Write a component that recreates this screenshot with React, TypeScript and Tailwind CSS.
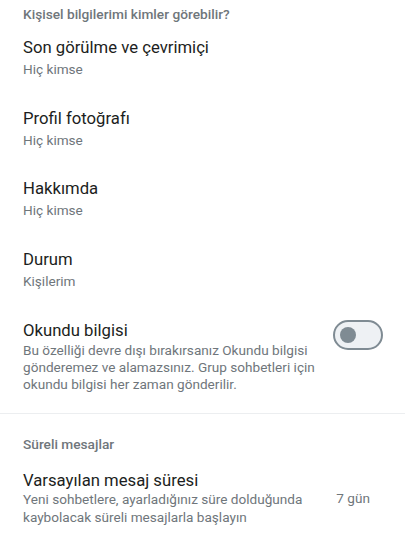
import React from "react";

const Row = ({ title, sub }: { title: string; sub: string }) => (
  <div className="pl-[23px] pr-[22px] pt-[14px] pb-[14.67px]">
    <div className="text-[16.7px] leading-[22px] text-[#1c1e21]">{title}</div>
    <div className="text-[13.6px] leading-[20px] text-[#6f767b]">{sub}</div>
  </div>
);

export default function App() {
  return (
    <div
      className="w-[405px] h-[541px] bg-white overflow-hidden"
      style={{ fontFamily: "Roboto, 'Noto Sans', sans-serif" }}
    >
      <div className="pl-[23px] pt-[4px] text-[13.7px] leading-[20px] font-medium text-[#6f767b]">
        Kişisel bilgilerimi kimler görebilir?
      </div>
      <div className="mt-[-1px]">
        <Row title="Son görülme ve çevrimiçi" sub="Hiç kimse" />
        <Row title="Profil fotoğrafı" sub="Hiç kimse" />
        <Row title="Hakkımda" sub="Hiç kimse" />
        <Row title="Durum" sub="Kişilerim" />
      </div>
      <div className="flex items-start pl-[23px] pr-[22px] pt-[14px] pb-[20px]">
        <div className="flex-1 pr-[10px]">
          <div className="text-[16.7px] leading-[22px] text-[#1c1e21]">Okundu bilgisi</div>
          <div className="text-[13.6px] leading-[17px] text-[#6f767b]">
            Bu özelliği devre dışı bırakırsanız Okundu bilgisi gönderemez ve alamazsınız. Grup sohbetleri için okundu bilgisi her zaman gönderilir.
          </div>
        </div>
        <div className="mt-[0px] w-[50px] h-[30px] shrink-0 rounded-full border-2 border-[#7f8b93] bg-[#eef1f4] flex items-center pl-[5px]">
          <div className="w-[16px] h-[16px] rounded-full bg-[#7f8b93]" />
        </div>
      </div>
      <div className="h-px bg-[#eceef0]" />
      <div className="pl-[23px] pt-[20px] text-[13.7px] leading-[20px] font-medium text-[#6f767b]">
        Süreli mesajlar
      </div>
      <div className="flex items-center pl-[23px] pr-[22px] pt-[17px]">
        <div className="flex-1 pr-[20px]">
          <div className="text-[16.7px] leading-[19px] text-[#1c1e21]">Varsayılan mesaj süresi</div>
          <div className="text-[13.6px] leading-[18px] text-[#6f767b]">
            Yeni sohbetlere, ayarladığınız süre dolduğunda kaybolacak süreli mesajlarla başlayın
          </div>
        </div>
        <div className="text-[13.6px] leading-[18px] text-[#6f767b] pr-[13px]">7 gün</div>
      </div>
    </div>
  );
}
